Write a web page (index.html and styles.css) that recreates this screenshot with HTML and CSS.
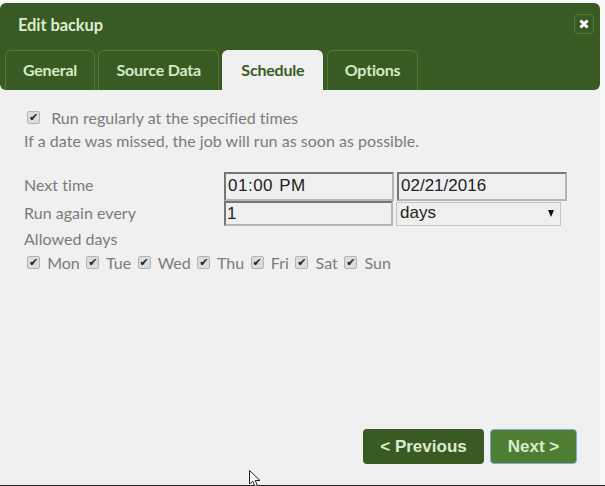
FILE: index.html
```html
<!DOCTYPE html>
<html lang="en">
<head>
    <meta charset="UTF-8">
    <meta name="viewport" content="width=device-width, initial-scale=1.0">
    <title>Edit backup</title>
    <link rel="stylesheet" href="styles.css">
</head>

<body>
    <div class="dialog">
        <header class="titlebar">
            <div class="title-row">
                <span class="title">Edit backup</span>
                <button class="close" aria-label="Close">
                    <svg width="10" height="10" viewBox="0 0 10 10"><path d="M1.5 1.5 L8.5 8.5 M8.5 1.5 L1.5 8.5" stroke="#fff" stroke-width="3" fill="none"/></svg>
                </button>
            </div>
            <nav class="tabs">
                <a class="tab">General</a>
                <a class="tab">Source Data</a>
                <a class="tab active">Schedule</a>
                <a class="tab">Options</a>
            </nav>
        </header>

        <main class="content">
            <label class="repeat-row"><input type="checkbox" checked> Run regularly at the specified times</label>
            <p class="hint">If a date was missed, the job will run as soon as possible.</p>

            <div class="form-row next-time">
                <label>Next time</label>
                <input class="field time" type="text" value="01:00 PM">
                <input class="field date" type="text" value="02/21/2016">
            </div>
            <div class="form-row run-again">
                <label>Run again every</label>
                <input class="field count" type="text" value="1">
                <div class="select">days<span class="arrow"></span></div>
            </div>

            <div class="allowed">Allowed days</div>
            <div class="days">
                <label class="day"><input type="checkbox" checked> Mon</label>
                <label class="day"><input type="checkbox" checked> Tue</label>
                <label class="day"><input type="checkbox" checked> Wed</label>
                <label class="day"><input type="checkbox" checked> Thu</label>
                <label class="day"><input type="checkbox" checked> Fri</label>
                <label class="day"><input type="checkbox" checked> Sat</label>
                <label class="day"><input type="checkbox" checked> Sun</label>
            </div>
        </main>

        <footer class="actions">
            <button class="btn prev">&lt; Previous</button>
            <button class="btn next">Next &gt;</button>
        </footer>
    </div>

    <svg class="cursor" width="14" height="17" viewBox="0 0 14 17"><path d="M0.5 0.5 L0.5 14 L3.8 11.2 L6 16.5 L8.4 15.4 L6.2 10.5 L11 10.5 Z" fill="#fff" stroke="#222" stroke-width="1"/></svg>
</body>
</html>
```

FILE: styles.css
```css
html, body {
    height: 100%;
}
body {
    margin: 0;
    background: #f8f8f8;
    font-family: Lato, "Noto Sans", Arial, sans-serif;
    color: #7b7b7b;
    overflow: hidden;
    border-bottom: 1px solid #222;
    box-sizing: border-box;
    padding-top: 3px;
}
.dialog {
    width: 600px;
    height: 482px;
    background: #f0f0f0;
    display: flex;
    flex-direction: column;
}

/* header */
.titlebar {
    background: #3a5a24;
    border-radius: 6px;
    height: 87px;
    box-sizing: border-box;
    padding: 0 5px;
    flex-shrink: 0;
}
.title-row {
    height: 47px;
    display: flex;
    align-items: center;
    justify-content: space-between;
    padding: 0 1px 3px 13px;
    box-sizing: border-box;
}
.title {
    color: #dcebcf;
    font-size: 16.5px;
    font-weight: 700;
    letter-spacing: -0.1px;
}
.close {
    width: 20px;
    height: 20px;
    padding: 0;
    background: transparent;
    border: 1px solid #4f7a35;
    border-radius: 4px;
    display: flex;
    align-items: center;
    justify-content: center;
    margin-bottom: 2px;
}
.tabs {
    display: flex;
    gap: 3.5px;
    height: 40px;
}
.tab {
    height: 40px;
    box-sizing: border-box;
    border: 1px solid #4f7a35;
    border-bottom: none;
    border-radius: 6px 6px 0 0;
    padding: 0 16.9px;
    line-height: 38px;
    font-size: 16px;
    font-weight: 700;
    letter-spacing: -0.2px;
    color: #d5eac4;
}
.tab.active {
    background: #f0f0f0;
    color: #3a5a24;
    border-color: #f0f0f0;
    padding: 0 18px;
}

/* schedule form */
.content {
    flex: 1;
    padding: 16px 0 0 24px;
    font-size: 16px;
    letter-spacing: 0.03px;
}
input[type="checkbox"] {
    appearance: none;
    width: 13px;
    height: 13px;
    margin: 0;
    background: #dcdcdc;
    border: 1px solid #b4b4b4;
    border-radius: 2px;
    display: inline-flex;
    align-items: center;
    justify-content: center;
    position: relative;
    top: -3px;
}
input[type="checkbox"]::before {
    content: "\2714";
    font-family: "DejaVu Sans", sans-serif;
    font-size: 11px;
    line-height: 1;
    color: #222;
}
.repeat-row {
    display: block;
    height: 23px;
    line-height: 23px;
    padding-left: 3px;
}
.repeat-row input {
    margin-right: 7px;
}
.hint {
    margin: 0;
    height: 23px;
    line-height: 23px;
}
.form-row {
    display: flex;
    align-items: center;
}
.form-row label {
    width: 200px;
    position: relative;
    top: -1px;
}
.next-time {
    margin-top: 19px;
    height: 30px;
}
.next-time label {
    top: -2px;
}
.run-again {
    height: 25px;
}
.field {
    box-sizing: border-box;
    background: #efefef;
    border: 2px solid;
    border-color: #767676 #b5b5b5 #b5b5b5 #767676;
    font-family: "Liberation Sans", Arial, sans-serif;
    font-size: 17px;
    color: #222;
    padding: 0 2px;
    margin: 0;
}
.time, .date {
    width: 170px;
    height: 29px;
}
.time {
    margin-right: 3px;
    word-spacing: 1px;
    letter-spacing: 0.5px;
}
.count {
    width: 169px;
    height: 25px;
    margin-right: 3px;
    padding: 0 1px;
}
.select {
    box-sizing: border-box;
    width: 165px;
    height: 24px;
    border: 1px solid #c4c4c4;
    background: #efefef;
    font-family: "Liberation Sans", Arial, sans-serif;
    font-size: 17px;
    line-height: 20px;
    color: #222;
    padding: 0 0 2px 3px;
    display: flex;
    align-items: center;
    justify-content: space-between;
}
.arrow {
    width: 0;
    height: 0;
    border-left: 3.5px solid transparent;
    border-right: 3.5px solid transparent;
    border-top: 7px solid #111;
    margin-right: 6px;
    margin-top: 2px;
}
.allowed {
    margin-top: 1px;
    height: 24px;
    line-height: 24px;
}
.days {
    display: flex;
    gap: 6.5px;
    padding-left: 3px;
    height: 24px;
    line-height: 24px;
}
.day input {
    margin-right: 3px;
}

/* bottom buttons */
.actions {
    display: flex;
    justify-content: flex-end;
    gap: 6px;
    padding: 0 23px 21px 0;
}
.btn {
    height: 35px;
    border-radius: 4px;
    border: 1px solid transparent;
    color: #dcebcf;
    font-family: "Liberation Sans", Arial, sans-serif;
    font-size: 17px;
    font-weight: bold;
    padding: 0;
}
.prev {
    width: 121px;
    background: #3a5a24;
}
.next {
    width: 87px;
    background: #4e7e33;
    border-color: #7fa9d6;
}

.cursor {
    position: absolute;
    left: 249px;
    top: 470px;
}
```
